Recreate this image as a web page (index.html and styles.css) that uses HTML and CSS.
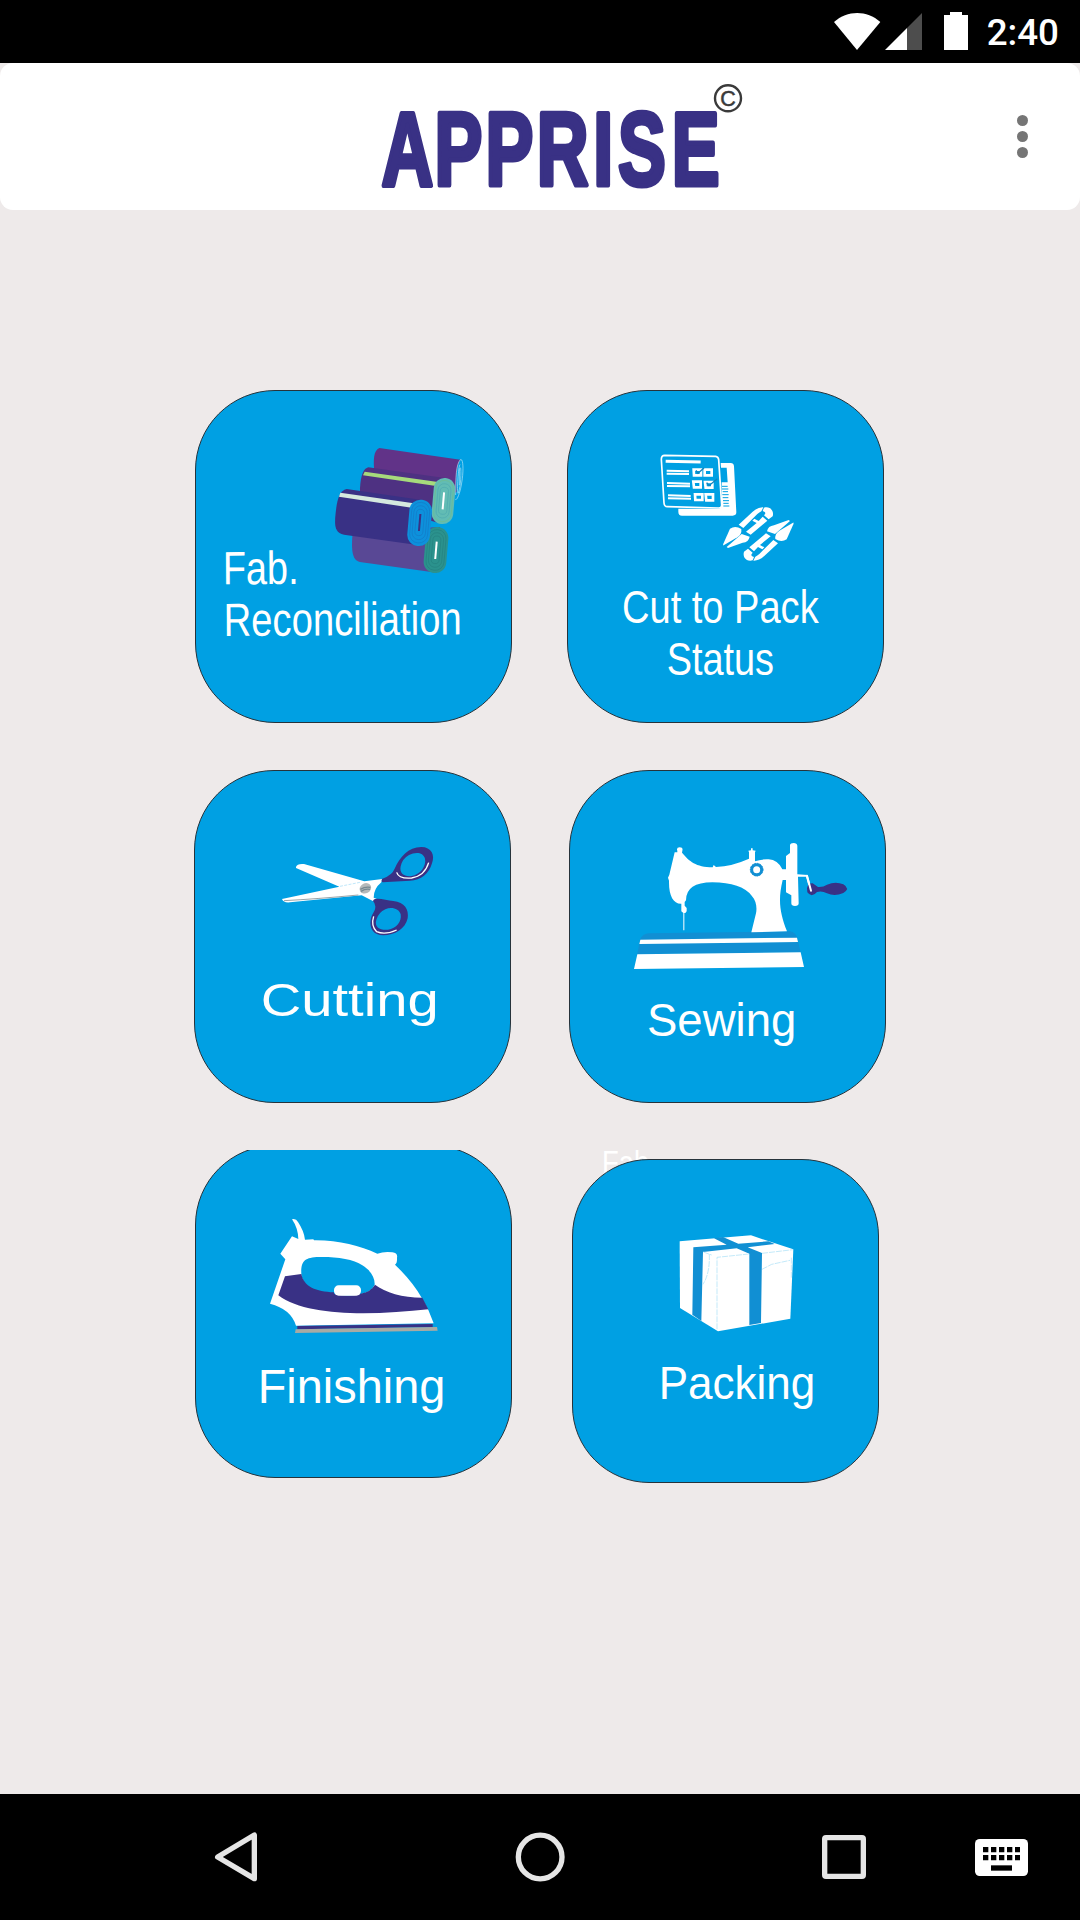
FILE: index.html
```html
<!DOCTYPE html>
<html lang="en">
<head>
<meta charset="utf-8">
<title>Apprise</title>
<link rel="stylesheet" href="styles.css">
</head>
<body>
<div class="screen">
  <div class="status-bar">
    <svg class="status-icons" viewBox="90 0 420 189" aria-hidden="true">
      <path class="white" d="M99 66C139 30 198 30 238 66L168 150Z"/>
      <path class="signal-off" d="M363 39V150H318V84Z"/>
      <path class="white" d="M318 84V150H252Z"/>
      <path class="white" d="M447 36H483V45H501V150H429V45H447Z"/>
    </svg>
    <span class="clock">2:40</span>
  </div>

  <header class="toolbar">
    <svg class="logo" viewBox="0 0 400 147" role="img" aria-label="Apprise">
      <g transform="translate(0 52.200) scale(.69 1)">
        <text class="logo-word" x="31 108 182 256 338 374 452" y="70">APPRISE</text>
      </g>
      <circle class="copy-ring" cx="368" cy="35.300" r="13"/>
      <text class="copy-c" x="360.300" y="43">C</text>
    </svg>
    <button class="overflow" aria-label="More options"><i></i><i></i><i></i></button>
  </header>

  <main class="menu">
    <div class="row row-first">
      <button class="tile">
        <svg class="art" viewBox="15 15 951 999">
          <path fill="#613388" d="M568 189L811 224C800 240 796 280 800 320L770 345L553 262C550 225 550 197 568 189Z"/>
          <path class="roll-edge" d="M811 224C821 218 821 265 814 300C809 328 800 348 796 343M811 224C798 238 797 280 797 330M811 240C806 230 800 320 804 325C809 320 815 275 812 248M808 250V300"/>
          <path fill="#4e3182" d="M535 247L765 279L750 415L510 350V310C512 270 521 250 535 247Z"/>
          <path fill="#a6da7c" d="M524 260L744 291L738 303L519 271Z"/>
          <path fill="#594895" d="M488 440L750 426L740 563L515 532C486 528 483 500 488 440Z"/>
          <path fill="#00a0e3" d="M724 414H760V424H724Z"/>
          <g transform="rotate(5 760 348)">
            <rect x="728" y="279" width="65" height="138" rx="32" fill="#62bcb4"/>
            <rect class="coil green" x="734" y="286" width="53" height="124" rx="26"/>
            <rect class="coil" x="741" y="296" width="39" height="103" rx="19"/>
            <rect class="coil" x="748" y="307" width="25" height="81" rx="12"/>
            <path class="core" d="M760 322V373"/>
          </g>
          <g transform="rotate(5 738 495)">
            <rect x="704" y="426" width="68" height="138" rx="33" fill="#2b928d"/>
            <rect class="coil dark" x="711" y="434" width="54" height="122" rx="26"/>
            <rect class="coil dark" x="718" y="443" width="40" height="104" rx="20"/>
            <rect class="coil dark" x="726" y="453" width="24" height="83" rx="12"/>
            <path class="core" d="M738 470V522"/>
          </g>
          <path fill="#393185" d="M470 312L695 345L682 480L462 449C434 444 434 421 436 394C440 347 447 317 470 312Z"/>
          <path fill="#d5e9df" d="M451 323L671 355L665 368L447 335Z"/>
          <g transform="rotate(5 689 413)">
            <rect x="655" y="344" width="68" height="139" rx="33" fill="#0d91dc"/>
            <rect class="coil blue" x="662" y="352" width="54" height="122" rx="26"/>
            <rect class="coil blue" x="669" y="362" width="40" height="102" rx="20"/>
            <rect class="coil blue" x="677" y="373" width="24" height="79" rx="12"/>
            <path class="core navy" d="M689 387V438"/>
          </g>
          <g transform="rotate(-.4 108 753)">
            <text class="label" x="100" y="598" textLength="227" lengthAdjust="spacingAndGlyphs">Fab.</text>
            <text class="label" x="101" y="753" textLength="714" lengthAdjust="spacingAndGlyphs">Reconciliation</text>
          </g>
        </svg>
      </button>
      <button class="tile">
        <svg class="art" viewBox="21 15 951 999">
          <path class="white" d="M482 234H512Q521 234 522 244L529 382Q529 392 518 392H366Q355 392 355 380V371H475Q486 371 486 358L485 292H503L500 248H483Z"/>
          <path d="M486 304H503M486 312H505M488 320H504M487 329H506M488 338H505M489 347H507M490 355H506M490 363H508" stroke="#00a0e3" stroke-width="3"/>
          <path d="M314 211L467 214Q475 215 476 224L485 360Q485 370 475 369L322 365Q313 365 312 354L304 223Q304 211 314 211Z" fill="none" stroke="#fff" stroke-width="5"/>
          <path d="M317 229L422 231" stroke="#fff" stroke-width="9"/>
          <path d="M320 257L387 259M320 266L387 267M321 294L390 296M321 303L390 304M324 331L392 333M324 340L393 341" stroke="#fff" stroke-width="6"/>
          <g fill="none" stroke="#fff" stroke-width="8"><path d="M401 254H423V271H402ZM434 254H455V271H434ZM400 290H422V307H402ZM435 291H457V308H437ZM405 328H427V345H406ZM437 328H459V346H439Z"/></g>
          <path d="M408 256L414 265L432 249M440 293L447 302L472 281" fill="none" stroke="#1284bd" stroke-width="4"/>
          <g id="snips">
            <path class="white" d="M510 431Q526 421 544 432Q546 448 532 457L491 481Q488 482 490 476Z"/>
            <path class="white" d="M545 447L569 455Q566 471 548 473L504 489L500 486Z"/>
            <path class="white" d="M536 419L578 380Q594 366 610 367L604 379Q598 382 592 387L550 429Z"/>
            <path class="white" d="M612 368C631 363 643 378 638 394L626 403L612 391Q622 382 608 378Z"/>
            <path class="white" d="M608 395L622 407L572 449L558 440L590 414L577 407L583 401L596 408Z"/>
          </g>
          <use href="#snips" transform="rotate(180 595 447)"/>
          <text class="label" x="186" y="715" textLength="590" lengthAdjust="spacingAndGlyphs">Cut to Pack</text>
          <text class="label" x="320" y="870" textLength="322" lengthAdjust="spacingAndGlyphs">Status</text>
        </svg>
      </button>
    </div>

    <div class="row row-second">
      <button class="tile">
        <svg class="art" viewBox="12 15 951 999">
          <path class="white" d="M318 306Q321 295 342 297L523 349L577 342L574 352Q551 371 551 398L561 402L550 409L515 391L300 412Q280 414 276 402L448 365L318 309Z"/>
          <path d="M282 407Q380 402 505 390" fill="none" stroke="#9ba4a8" stroke-width="3"/>
          <path d="M450 364L510 352" stroke="#9edbf6" stroke-width="2" stroke-dasharray="9 4"/>
          <ellipse cx="526" cy="370" rx="18" ry="15" transform="rotate(-28 526 370)" fill="#b5b9ba"/>
          <path d="M511 373Q526 364 541 367M513 379Q526 370 540 373" fill="none" stroke="#758891" stroke-width="4"/>
          <path fill="#393185" fill-rule="evenodd" d="M577 341Q606 332 615 309C629 277 655 246 694 246C724 246 736 270 726 295C717 326 693 346 660 347L578 352Q572 348 577 341ZM632 304C627 327 645 336 665 333C690 329 710 303 705 281C700 261 676 260 657 270Q637 281 632 304Z"/>
          <path d="M620 322Q626 342 665 339Q704 333 716 293" fill="none" stroke="#fff" stroke-width="4"/>
          <path fill="#393185" fill-rule="evenodd" d="M551 404C561 396 590 406 610 408C644 411 657 434 653 460C646 492 614 511 580 511C550 511 538 490 542 465C544 447 557 440 556 424Q555 414 549 408ZM559 464C552 488 571 496 594 494C619 491 636 469 632 448C628 431 604 424 586 433Q566 442 559 464Z"/>
          <path d="M551 454Q542 482 560 500Q585 511 620 495" fill="none" stroke="#fff" stroke-width="4"/>
          <text class="label" x="212" y="753" textLength="534" lengthAdjust="spacingAndGlyphs">Cutting</text>
        </svg>
      </button>
      <button class="tile">
        <svg class="art" viewBox="27 15 951 999">
          <path fill="#118fd3" d="M240 524Q247 506 267 505L690 499Q707 502 712 520L722 562L232 567Z"/>
          <path class="white" d="M241 524L711 518L714 531L238 537ZM232 568L722 562L732 606L222 612Z"/>
          <path class="white" d="M344 262H352V257Q348 247 359 247Q370 247 367 257L366 263C388 289 407 306 458 307L461 300L468 306Q516 304 567 281V262L565 257L573 256V250H578V256L587 257L585 262V289Q603 282 626 283Q653 284 667 313H678V273L690 264V240Q691 234 701 234Q711 234 712 242V328L743 330L756 377L750 379L738 335H714L716 415Q716 423 705 423Q694 423 694 415V391L678 382V345H668C653 406 660 445 681 499L574 502L588 445C591 430 590 408 575 392Q544 353 457 352Q378 352 378 406L374 411V422L380 429V439L376 444H373V496H370V444L364 439V416C340 417 326 392 327 347L324 338L328 329Z"/>
          <circle cx="590" cy="314" r="15" class="white" stroke="#118fd3" stroke-width="9"/>
          <circle cx="590" cy="314" r="19" fill="none" stroke="#118fd3" stroke-width="3" stroke-dasharray="5 3"/>
          <path fill="#393185" d="M741 370Q744 354 758 355L774 366Q790 367 801 359Q827 348 850 358Q872 371 850 384Q824 395 801 385Q785 376 771 381Q755 400 742 382Z"/>
          <path d="M741 332L753 377" stroke="#fff" stroke-width="6" stroke-linecap="round"/>
          <text class="label" x="261" y="812" textLength="448" lengthAdjust="spacingAndGlyphs">Sewing</text>
        </svg>
      </button>
    </div>

    <div class="row row-third">
      <div class="tile-clip">
        <button class="tile">
          <svg class="art" viewBox="15 15 951 999">
            <path class="white" d="M306 238Q318 235 324 246Q342 273 345 299L370 298L372 301C444 300 509 317 562 341Q582 334 607 337Q624 339 621 353Q622 370 615 374Q666 423 695 473L715 510L731 550L318 557Q303 507 240 491L286 358L271 341L306 289L325 297Q324 264 306 238Z"/>
            <path fill="#00a0e3" d="M334 403C332 364 343 352 387 351C438 350 490 357 517 376C542 391 555 413 554 434C544 458 513 465 474 467C415 466 339 457 334 403Z"/>
            <path fill="#393185" d="M285 409L334 402C341 440 378 455 432 457V461Q475 473 512 461Q543 455 555 434C586 457 637 473 697 473L715 508C557 525 353 533 265 466Z"/>
            <rect class="white" x="432" y="436" width="81" height="31" rx="14"/>
            <path fill="#393185" d="M322 558L728 552V561L322 568Z"/>
            <path fill="#a9aaa3" d="M317 568L741 561L743 572L315 579Z"/>
            <text class="label label-tall" x="203" y="790" textLength="563" lengthAdjust="spacingAndGlyphs">Finishing</text>
          </svg>
        </button>
      </div>
      <div class="pack-cell">
        <span class="ghost">Fab.</span>
        <button class="tile tile-pack">
          <svg class="art" viewBox="36 57 921 972">
            <path class="white" d="M359 304L573 286L700 328L691 536L474 574L360 504Z"/>
            <path fill="#118fd3" d="M400 322L500 314L462 295L489 291L535 311L625 304L644 312L563 322L606 339L603 549L568 555V341L530 325L429 336L424 543L397 524Z"/>
            <path d="M471 568V352L567 342M606 340L699 329M448 342Q450 402 428 434M606 388L635 373L690 361M694 353V415M430 336L455 345" fill="none" stroke="#b7e4f8" stroke-width="2.500" stroke-dasharray="18 3"/>
            <text class="label" x="296" y="776" textLength="470" lengthAdjust="spacingAndGlyphs">Packing</text>
          </svg>
        </button>
      </div>
    </div>
  </main>

  <nav class="nav-bar">
    <svg class="nav-icon back" viewBox="90 42 180 378"><path d="M113 231L223 165V296Z"/></svg>
    <svg class="nav-icon home" viewBox="990 42 180 378"><circle cx="1080.500" cy="231" r="65.500"/></svg>
    <svg class="nav-icon recents" viewBox="105 42 180 378"><rect x="134" y="173" width="116" height="116" rx="4"/></svg>
    <svg class="nav-icon keyboard" viewBox="570 42 180 378">
      <rect class="keys" x="585" y="177" width="159" height="111" rx="14"/>
      <path class="key-holes" d="M609 209H720M609 233H720" stroke-dasharray="16 8"/>
      <path class="key-holes" d="M633 264H696"/>
    </svg>
  </nav>
</div>
</body>
</html>
```
FILE: styles.css
```css
* { box-sizing: border-box; }

body {
  margin: 0;
  background: #eeeaea;
  font-family: "Liberation Sans", Arial, sans-serif;
}

button {
  margin: 0;
  padding: 0;
  border: 0;
  background: none;
  font: inherit;
}

.screen {
  width: 1080px;
  height: 1920px;
  display: flex;
  flex-direction: column;
  overflow: hidden;
}

.white { fill: #fff; }

/* Status bar */
.status-bar {
  height: 63px;
  padding-right: 21px;
  display: flex;
  justify-content: flex-end;
  background: #000;
}
.status-icons { width: 140px; height: 63px; margin-right: 16px; }
.signal-off { fill: #4d4d4d; }
.clock {
  color: #fff;
  font: 500 36.75px/66px Roboto, sans-serif;
  white-space: nowrap;
}

/* Toolbar */
.toolbar {
  height: 147px;
  padding: 0 50px 0 360px;
  display: flex;
  justify-content: space-between;
  background: #fff;
  border-radius: 13px;
}
.logo { width: 400px; height: 147px; }
.logo-word {
  font-size: 104px;
  font-weight: bold;
  fill: #393185;
  stroke: #393185;
  stroke-width: 5px;
  stroke-linejoin: round;
}
.copy-ring { fill: none; stroke: #3a3a3a; stroke-width: 2.4px; }
.copy-c { font-size: 21.5px; fill: #3a3a3a; stroke: #3a3a3a; stroke-width: .5px; }
.overflow {
  padding-top: 52px;
  width: 15px;
  display: flex;
  flex-direction: column;
  align-items: center;
  gap: 5px;
}
.overflow i { width: 11px; height: 11px; border-radius: 50%; background: #757575; }

/* Menu */
.menu {
  flex: 1;
  padding-top: 180px;
  display: flex;
  flex-direction: column;
  gap: 47px;
}
.row { display: flex; align-items: flex-start; }
.row-first { padding-left: 195px; gap: 55px; }
.row-second { padding-left: 194px; gap: 58px; }
.row-third { padding-left: 195px; gap: 60px; }

.tile {
  flex: none;
  display: block;
  width: 317px;
  height: 333px;
  border: 1px solid #26333b;
  border-radius: 80px;
  background: #00a0e3;
}
.tile-clip { height: 328px; overflow: hidden; }
.tile-clip .tile { margin-top: -5px; }
.pack-cell { position: relative; padding-top: 9px; }
.tile-pack { position: relative; width: 307px; height: 324px; border-radius: 77px; }
.art { display: block; width: calc(100% + 2px); height: calc(100% + 2px); margin: -1px; }
.label { font-size: 140px; fill: #fff; }
.label-tall { font-size: 145px; }
.ghost {
  position: absolute;
  left: 30px;
  top: -6px;
  color: #fff;
  font-size: 33px;
  line-height: 37px;
  transform: scaleX(.83);
  transform-origin: left;
}

.roll-edge { fill: none; stroke: #b7e5f8; stroke-width: 2px; }
.coil { fill: none; stroke: #4ea9b0; stroke-width: 2px; }
.coil.green { stroke: #70bd8c; }
.coil.dark { stroke: #24817f; }
.coil.blue { stroke: #1579c6; }
.core { stroke: #fff; stroke-width: 6px; }
.core.navy { stroke: #393185; }

/* Navigation bar */
.nav-bar { flex: none; height: 126px; display: flex; background: #000; }
.nav-icon {
  flex: none;
  width: 60px;
  height: 126px;
  fill: none;
  stroke: #e5e5e5;
  stroke-width: 16px;
  stroke-linejoin: round;
}
.back { margin-left: 210px; }
.home { margin-left: 240px; }
.recents { margin-left: 245px; }
.keyboard { margin-left: 95px; }
.keys { fill: #fff; stroke: none; }
.key-holes { stroke: #000; }
```
